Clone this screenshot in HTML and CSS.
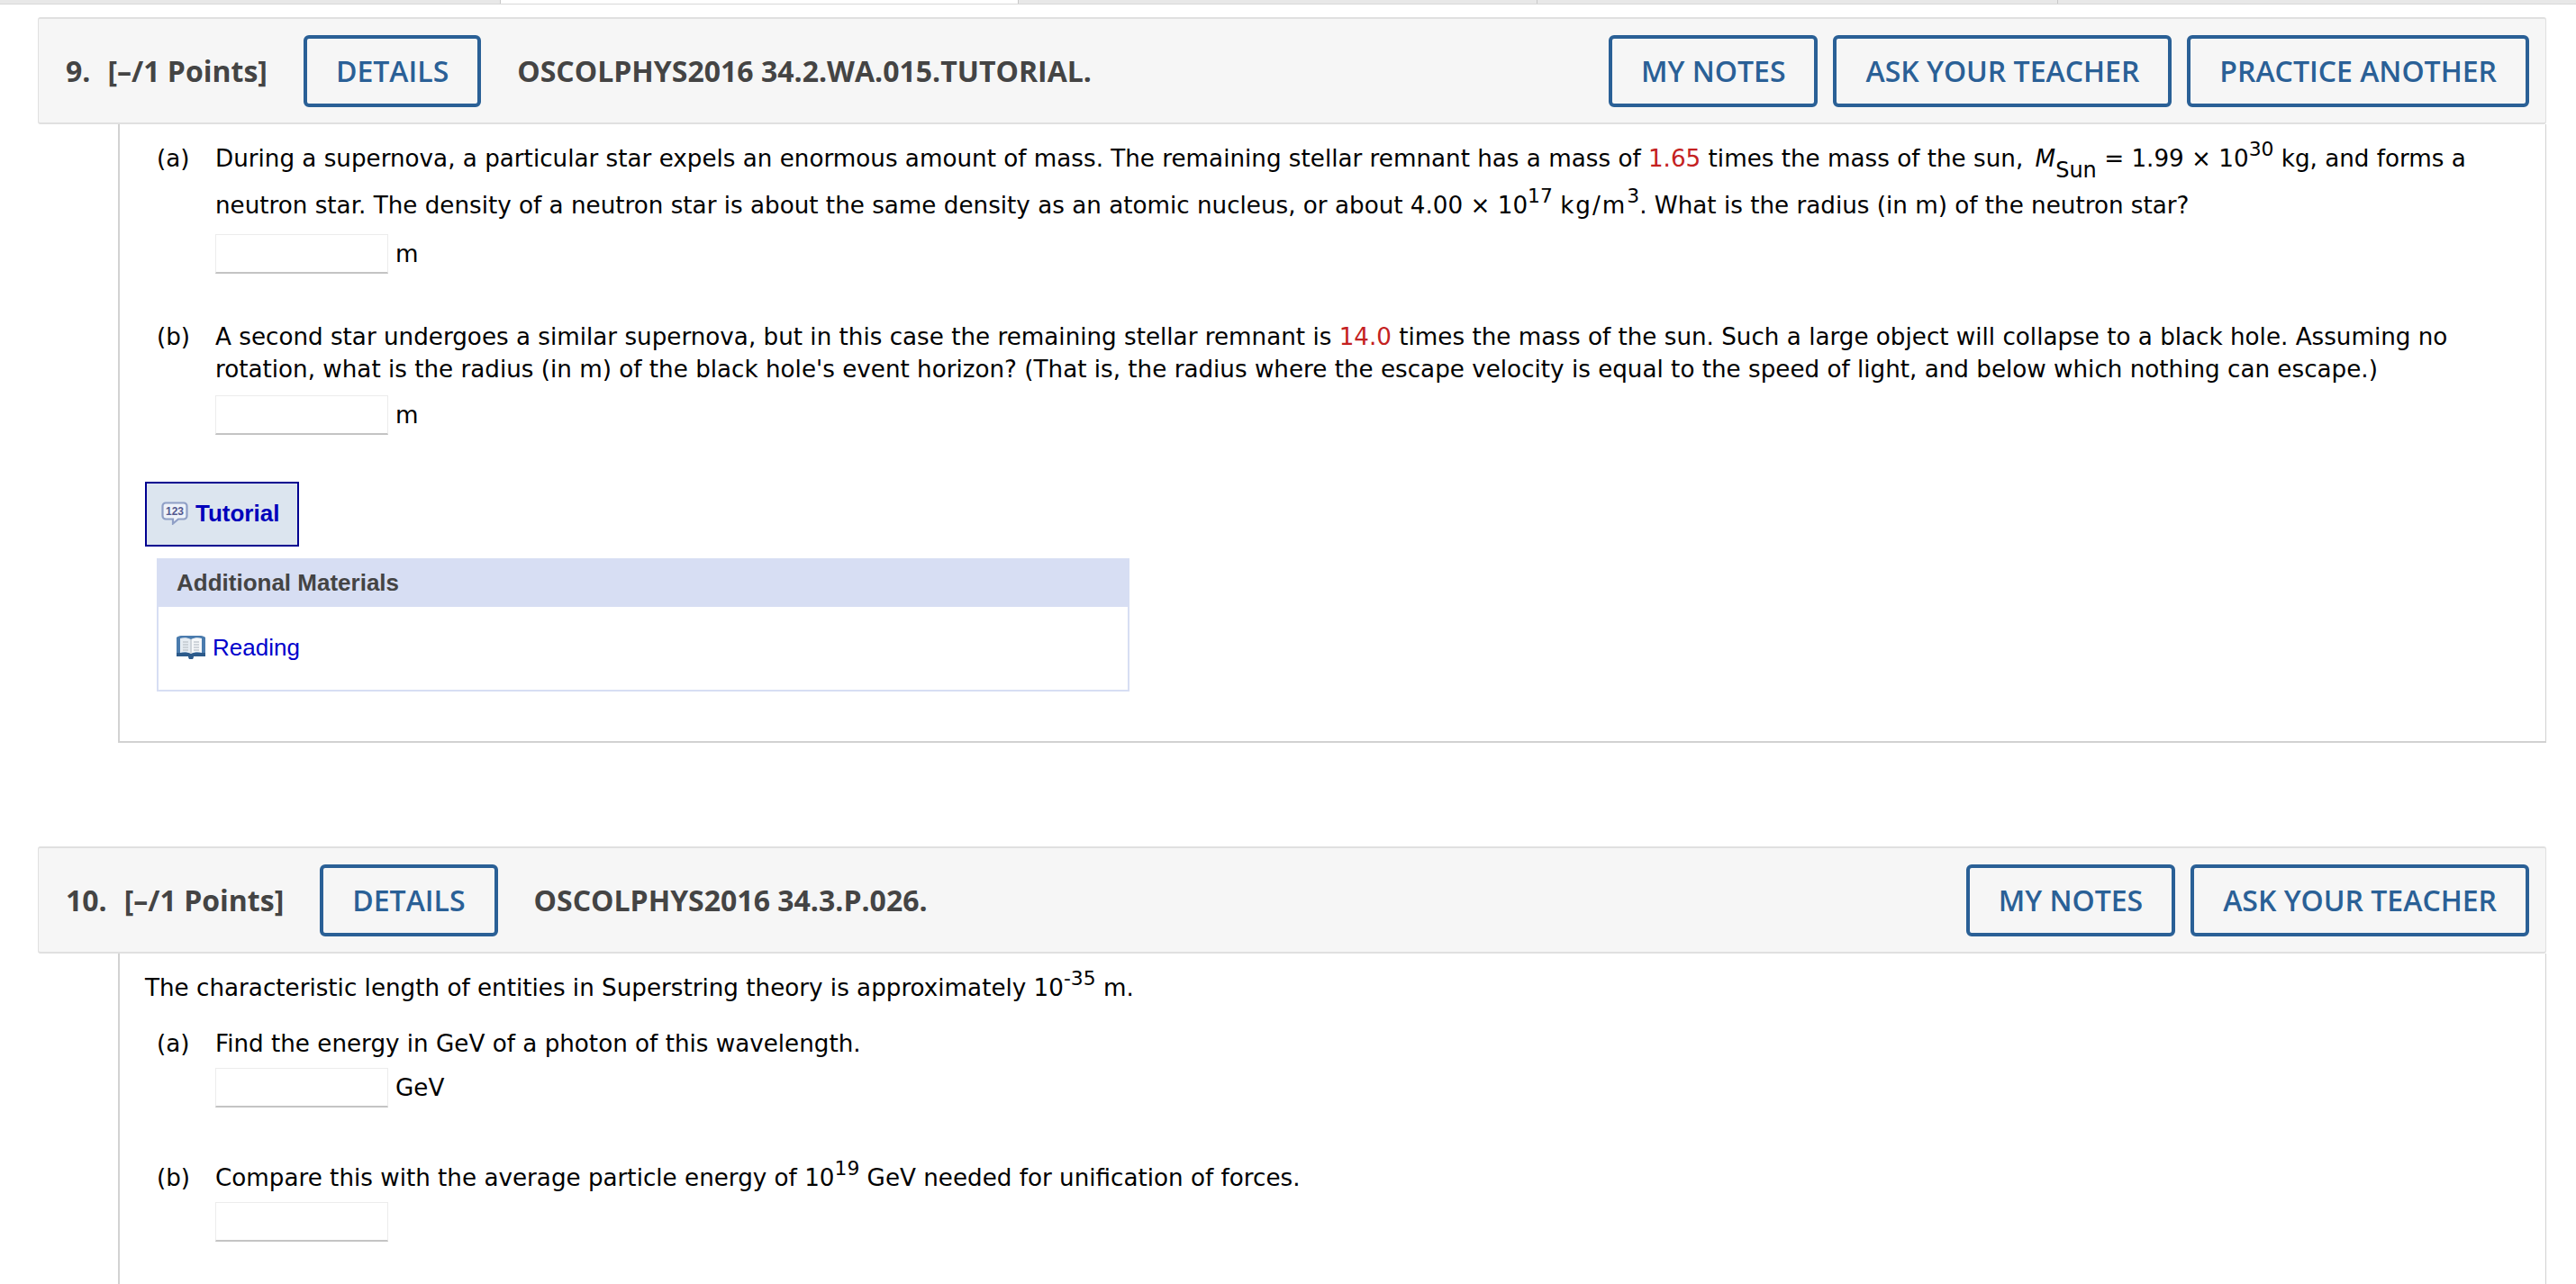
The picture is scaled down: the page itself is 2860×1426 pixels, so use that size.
FILE: index.html
```html
<!DOCTYPE html>
<html lang="en">
<head>
  <meta charset="UTF-8" />
  <title>Assignment</title>
  <link rel="stylesheet" href="styles.css">
</head>
<body>
  <div class="tabs">
    <div class="tab tab-1"></div>
    <div class="tab tab-active"></div>
    <div class="tab tab-2"></div>
    <div class="tab tab-3"></div>
    <div class="tab tab-4"></div>
  </div>

  <div class="question q9">
    <div class="q-head">
      <span class="q-num">9.</span>
      <span class="q-points">[&ndash;/1 Points]</span>
      <a class="btn btn-details">DETAILS</a>
      <span class="q-code">OSCOLPHYS2016 34.2.WA.015.TUTORIAL.</span>
      <div class="q-actions">
        <a class="btn">MY NOTES</a>
        <a class="btn">ASK YOUR TEACHER</a>
        <a class="btn">PRACTICE ANOTHER</a>
      </div>
    </div>
    <div class="q-body">
      <div class="part part-tall">
        <span class="part-label">(a)</span>
        <div class="part-main">
          <div class="part-text">During a supernova, a particular star expels an enormous amount of mass. The remaining stellar remnant has a mass of <span class="val">1.65</span> times the mass of the sun, <i class="sym">M</i><sub>Sun</sub> = 1.99 &times; 10<sup>30</sup> kg, and forms a neutron star. The density of a neutron star is about the same density as an atomic nucleus, or about 4.00 &times; 10<sup>17</sup> <span class="unit">kg/m</span><sup>3</sup>. What is the radius (in m) of the neutron star?</div>
          <div class="answer"><input class="ans-box" type="text"><span>m</span></div>
        </div>
      </div>
      <div class="part">
        <span class="part-label">(b)</span>
        <div class="part-main">
          <div class="part-text">A second star undergoes a similar supernova, but in this case the remaining stellar remnant is <span class="val">14.0</span> times the mass of the sun. Such a large object will collapse to a black hole. Assuming no rotation, what is the radius (in m) of the black hole's event horizon? (That is, the radius where the escape velocity is equal to the speed of light, and below which nothing can escape.)</div>
          <div class="answer"><input class="ans-box" type="text"><span>m</span></div>
        </div>
      </div>
      <a class="tutorial">
        <svg class="icon-tut" viewBox="0 0 30 26">
          <path d="M5 1.500h20a3.500 3.500 0 0 1 3.500 3.500v11a3.500 3.500 0 0 1-3.500 3.500h-6l-6 5v-5H5A3.500 3.500 0 0 1 1.500 16V5A3.500 3.500 0 0 1 5 1.500z" fill="#eef2f9" stroke="#8f9fc6" stroke-width="2.200"/>
          <text x="15" y="15" text-anchor="middle" class="icon-tut-text">123</text>
        </svg>
        Tutorial
      </a>
      <div class="materials">
        <div class="materials-head">Additional Materials</div>
        <div class="materials-body">
          <a class="reading">
            <svg class="icon-book" viewBox="0 0 32 27">
              <path d="M0 2c1-1 3-2 5-2h22c2 0 4 1 5 2v21H19l-1 3h-4l-1-3H0z" fill="#4a7bad"/>
              <path d="M0 19h32v4H19l-1 3h-4l-1-3H0z" fill="#2c5a8a"/>
              <path d="M4 3c4-1.500 8-1 12 1v16c-4-2-8-2.500-12-1z" fill="#e6ecf2"/>
              <path d="M28 3c-4-1.500-8-1-12 1v16c4-2 8-2.500 12-1z" fill="#f5f7f9"/>
              <path d="M7 7h6M7 10h6M7 13h6M7 16h6M19 7h6M19 10h6M19 13h6M19 16h6" stroke="#c2c9d0" stroke-width="1.600"/>
              <path d="M15 4h2v16h-2z" fill="#cdd3d9"/>
            </svg>
            Reading
          </a>
        </div>
      </div>
    </div>
  </div>

  <div class="question q10">
    <div class="q-head">
      <span class="q-num">10.</span>
      <span class="q-points">[&ndash;/1 Points]</span>
      <a class="btn btn-details">DETAILS</a>
      <span class="q-code">OSCOLPHYS2016 34.3.P.026.</span>
      <div class="q-actions">
        <a class="btn">MY NOTES</a>
        <a class="btn">ASK YOUR TEACHER</a>
      </div>
    </div>
    <div class="q-body q-body-open">
      <div class="q-intro">The characteristic length of entities in Superstring theory is approximately 10<sup>-35</sup> m.</div>
      <div class="part part-short">
        <span class="part-label">(a)</span>
        <div class="part-main">
          <div class="part-text">Find the energy in GeV of a photon of this wavelength.</div>
          <div class="answer"><input class="ans-box" type="text"><span>GeV</span></div>
        </div>
      </div>
      <div class="part">
        <span class="part-label">(b)</span>
        <div class="part-main">
          <div class="part-text">Compare this with the average particle energy of 10<sup>19</sup> GeV needed for unification of forces.</div>
          <div class="answer"><input class="ans-box" type="text"></div>
        </div>
      </div>
    </div>
  </div>
</body>
</html>
```

FILE: styles.css
```css
html, body {
  margin: 0;
  padding: 0;
  background: #fff;
  height: 1426px;
  overflow: hidden;
}

body {
  font-family: "DejaVu Sans", sans-serif;
  font-size: 26.2px;
  color: #000;
}

.tabs {
  display: flex;
  height: 4px;
  border-bottom: 1px solid #d8d8d8;
}

.tab {
  background: #e8e8e8;
  border-right: 1px solid #c8c8c8;
}

.tab-1 { width: 555px; }
.tab-active { width: 574px; background: #fff; }
.tab-2 { width: 575px; }
.tab-3 { width: 577px; }
.tab-4 { flex: 1; border-right: none; }

.question {
  margin: 14px 33px 0 42px;
}

.q10 {
  margin-top: 115px;
}

.q-head {
  display: flex;
  align-items: center;
  height: 119px;
  box-sizing: border-box;
  padding: 0 18px 0 30px;
  background: #f6f6f6;
  border: 1px solid #e0e0e0;
  border-top-width: 2px;
  border-bottom-width: 2px;
  border-radius: 3px;
  font-family: "Open Sans", sans-serif;
  font-weight: 600;
  font-size: 32px;
  color: #444;
}

.q-num {
  font-weight: 700;
  margin-right: 19px;
}

.q-points {
  font-weight: 700;
}

.q-code {
  font-weight: 700;
}

.btn {
  display: block;
  box-sizing: border-box;
  height: 80px;
  line-height: 72px;
  padding: 0 32px;
  border: 4px solid #2a6096;
  border-radius: 6px;
  color: #2a6096;
}

.btn-details {
  margin: 0 40px;
}

.q-actions {
  display: flex;
  gap: 17px;
  margin-left: auto;
}

.q-body {
  margin-left: 89px;
  box-sizing: border-box;
  padding: 12px 0 55px;
  background: #fff;
  border: 2px solid #d2d2d2;
  border-top: none;
  border-right-width: 1px;
}

.q-body-open {
  padding-top: 20px;
  height: 400px;
  border-bottom: none;
}

.part {
  display: flex;
  margin-bottom: 52px;
  line-height: 36px;
  padding-left: 41px;
}

.part-label {
  width: 65px;
  flex-shrink: 0;
}

.part-text {
  line-height: 36px;
  max-width: 2560px;
}

.part-tall .part-label {
  line-height: 52px;
}

.part-tall .part-text {
  line-height: 52px;
}

.part-tall .answer {
  margin-top: 6px;
}

sup, sub {
  line-height: 0;
}

sup {
  vertical-align: 12px;
}

sub {
  vertical-align: -12px;
  font-size: 24px;
}

.sym {
  margin-left: 5px;
}

.unit {
  letter-spacing: 2px;
}

.val {
  color: #c42121;
}

.answer {
  display: flex;
  align-items: center;
  gap: 8px;
  margin-top: 11px;
}

.q-body-open .answer {
  margin-top: 9px;
}

.ans-box {
  width: 192px;
  height: 44px;
  box-sizing: border-box;
  padding: 0;
  border: 1px solid #ececec;
  border-bottom: 2px solid #c4c4c4;
  background: #fff;
}

.tutorial {
  display: inline-flex;
  align-items: center;
  gap: 8px;
  height: 72px;
  box-sizing: border-box;
  margin-left: 28px;
  padding: 0 20px 2px 16px;
  background: #dce5ef;
  border: 2px solid #000090;
  font-family: "Liberation Sans", sans-serif;
  font-weight: 700;
  font-size: 26px;
  color: #0000bb;
}

.icon-tut {
  width: 30px;
  height: 26px;
}

.icon-tut-text {
  font-family: "Liberation Sans", sans-serif;
  font-weight: 700;
  font-size: 12px;
  fill: #54588f;
}

.materials {
  width: 1080px;
  margin: 13px 0 0 41px;
  box-sizing: border-box;
  border: 2px solid #d7def3;
  border-top: none;
  font-family: "Liberation Sans", sans-serif;
}

.materials-head {
  margin: 0 -2px;
  height: 54px;
  line-height: 54px;
  padding-left: 22px;
  background: #d7def3;
  font-weight: 700;
  font-size: 26px;
  color: #444;
}

.materials-body {
  height: 92px;
  padding: 0 0 2px 20px;
  box-sizing: border-box;
  display: flex;
  align-items: center;
}

.reading {
  display: flex;
  align-items: center;
  gap: 8px;
  font-size: 26px;
  color: #0000cc;
}

.icon-book {
  width: 32px;
  height: 27px;
}

.q-intro {
  padding-left: 28px;
  margin-bottom: 26px;
  line-height: 36px;
}

.part-short {
  margin-bottom: 60px;
}
```
